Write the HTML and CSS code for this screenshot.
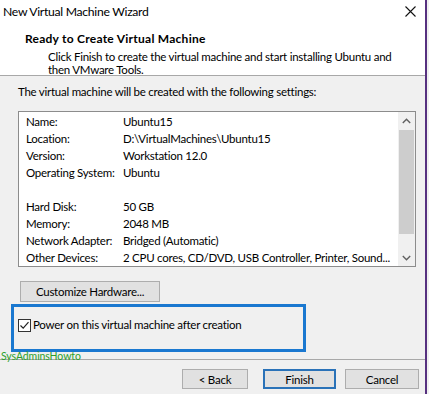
FILE: index.html
```html
<!DOCTYPE html>
<html>
<head>
<meta charset="utf-8">
<link rel="stylesheet" href="styles.css">
</head>
<body>
<div class="window">
  <div class="top">
    <div class="titlebar">
      <span class="title">New Virtual Machine Wizard</span>
      <svg class="close" width="11" height="11" viewBox="0 0 11 11"><path d="M0.5 0.5 L10.5 10.5 M10.5 0.5 L0.5 10.5" stroke="#111" stroke-width="1.1" fill="none"/></svg>
    </div>
    <div class="header">
      <div class="h-title">Ready to Create Virtual Machine</div>
      <div class="h-desc">Click Finish to create the virtual machine and start installing Ubuntu and<br>then VMware Tools.</div>
    </div>
  </div>
  <div class="content">
    <p class="intro">The virtual machine will be created with the following settings:</p>
    <div class="listbox">
      <div class="rows">
        <div class="row"><span>Name:</span><span>Ubuntu15</span></div>
        <div class="row"><span>Location:</span><span>D:\VirtualMachines\Ubuntu15</span></div>
        <div class="row"><span>Version:</span><span>Workstation 12.0</span></div>
        <div class="row"><span>Operating System:</span><span>Ubuntu</span></div>
        <div class="row"></div>
        <div class="row"><span>Hard Disk:</span><span>50 GB</span></div>
        <div class="row"><span>Memory:</span><span>2048 MB</span></div>
        <div class="row"><span>Network Adapter:</span><span>Bridged (Automatic)</span></div>
        <div class="row"><span>Other Devices:</span><span>2 CPU cores, CD/DVD, USB Controller, Printer, Sound...</span></div>
      </div>
      <div class="scrollbar">
        <div class="arrow"><svg width="9" height="6" viewBox="0 0 9 6"><path d="M0.8 5 L4.5 1.3 L8.2 5" stroke="#606060" stroke-width="1.4" fill="none"/></svg></div>
        <div class="track"><div class="thumb"></div></div>
        <div class="arrow"><svg width="9" height="6" viewBox="0 0 9 6"><path d="M0.8 1 L4.5 4.7 L8.2 1" stroke="#606060" stroke-width="1.4" fill="none"/></svg></div>
      </div>
    </div>
    <button class="btn customize">Customize Hardware...</button>
    <div class="check">
      <svg class="box" width="13" height="13" viewBox="0 0 13 13"><rect x="0.5" y="0.5" width="12" height="12" fill="#fff" stroke="#333"/><path d="M2.5 6.5 L5.2 9.2 L10.5 3.2" stroke="#222" stroke-width="1.2" fill="none"/></svg>
      <span>Power on this virtual machine after creation</span>
    </div>
  </div>
  <div class="footer">
    <button class="btn back">&lt; Back</button>
    <button class="btn finish">Finish</button>
    <button class="btn cancel">Cancel</button>
  </div>
  <div class="highlight"></div>
  <div class="watermark">SysAdminsHowto</div>
</div>
</body>
</html>
```
FILE: styles.css
```css
html, body {
  margin: 0;
  padding: 0;
  background: #f0f0f0;
}
body {
  font-family: Lato, "Liberation Sans", sans-serif;
  font-size: 11.5px;
  letter-spacing: -0.25px;
  color: #000;
}
.window {
  position: relative;
  width: 425px;
  height: 394px;
  display: flex;
  flex-direction: column;
  background: #f0f0f0;
  border-right: 2px solid #56307f;
  box-sizing: content-box;
}
.top {
  background: #fff;
  height: 76px;
  border-bottom: 1px solid #a8a8a8;
  box-sizing: border-box;
}
.titlebar {
  height: 22px;
  display: flex;
  align-items: center;
  justify-content: space-between;
  padding: 0 9px 0 3px;
}
.title {
  font-size: 12.2px;
  letter-spacing: -0.3px;
  color: #000;
}
.close {
  display: block;
}
.header {
  padding: 9px 0 0 25px;
}
.h-title {
  font-weight: bold;
  font-size: 12px;
  letter-spacing: 0.25px;
  line-height: 16px;
}
.h-desc {
  padding-left: 23px;
  margin-top: 3px;
  line-height: 13px;
}
.content {
  flex: 1;
  padding: 8px 0 0 18px;
}
.intro {
  margin: 0;
  line-height: 16px;
}
.listbox {
  margin-top: 11px;
  width: 398px;
  height: 156px;
  border: 1px solid #8c8c8c;
  background: #fff;
  box-sizing: border-box;
  display: flex;
}
.rows {
  flex: 1;
  padding: 1px 0 0 7px;
  overflow: hidden;
}
.row {
  display: grid;
  grid-template-columns: 97px 1fr;
  height: 17px;
  line-height: 17px;
  white-space: nowrap;
}
.scrollbar {
  width: 17px;
  display: flex;
  flex-direction: column;
  background: #f0f0f0;
}
.arrow {
  height: 17px;
  display: flex;
  align-items: center;
  justify-content: center;
}
.track {
  flex: 1;
  padding: 1px 0 14px;
  display: flex;
}
.thumb {
  flex: 1;
  margin: 0 1px;
  height: 104px;
  background: #cdcdcd;
}
.btn {
  font-family: inherit;
  font-size: 11.5px;
  letter-spacing: -0.25px;
  color: #000;
  background: #e1e1e1;
  border: 1px solid #adadad;
  padding: 0;
  height: 21px;
  box-sizing: border-box;
  display: block;
}
.customize {
  margin: 14px 0 0 2px;
  width: 140px;
}
.check {
  display: flex;
  align-items: center;
  gap: 2px;
  margin-top: 15px;
  line-height: 16px;
}
.box {
  display: block;
}
.footer {
  height: 35px;
  border-top: 1px solid #a8a8a8;
  display: flex;
  justify-content: flex-end;
  align-items: flex-start;
  padding: 9px 6px 0 0;
  box-sizing: border-box;
}
.back {
  width: 66px;
  height: 20px;
}
.finish {
  width: 73px;
  height: 20px;
  margin-left: 15px;
  border: 2px solid #2a72b8;
}
.cancel {
  width: 74px;
  height: 20px;
  margin-left: 9px;
}
.highlight {
  position: absolute;
  left: 11px;
  top: 304px;
  width: 295px;
  height: 48px;
  border: 3px solid #1a78d0;
  box-sizing: border-box;
}
.watermark {
  position: absolute;
  left: 1px;
  top: 349px;
  font-size: 10.5px;
  letter-spacing: -0.1px;
  line-height: 14px;
  color: #2ca02c;
}
```
